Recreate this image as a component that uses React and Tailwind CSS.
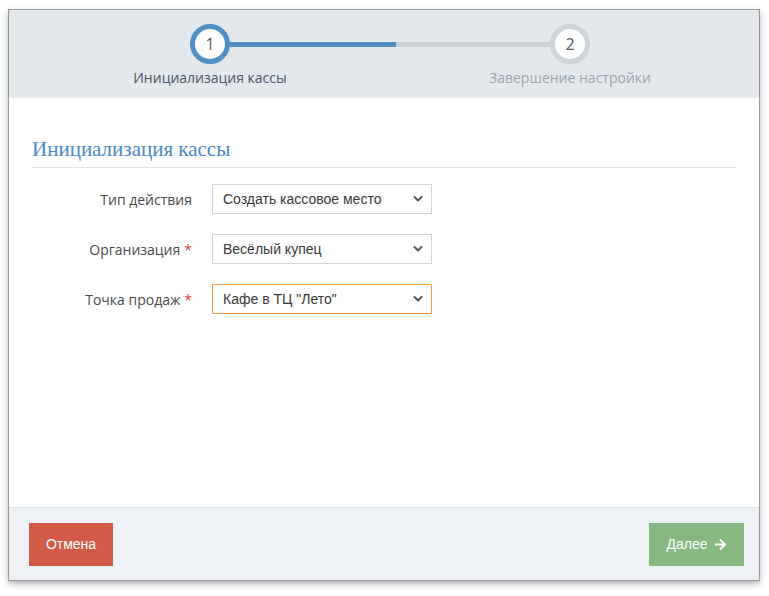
import React from "react";
import { FaArrowRight } from "react-icons/fa";

function Chevron() {
  return (
    <svg width="10" height="10" viewBox="0 0 10 10" className="text-[#555]">
      <polyline points="1.5 3 5 6.5 8.5 3" fill="none" stroke="currentColor" strokeWidth="2" strokeLinecap="round" strokeLinejoin="round" />
    </svg>
  );
}

function Field({ label, value, required, active }) {
  return (
    <div className="flex items-center">
      <div className="w-[160px] text-right text-[14px] text-[#4a4a4a]" style={{ fontFamily: '"Open Sans", sans-serif' }}>
        {label}
        {required && <span className="text-[#e04343] ml-[4px]">*</span>}
      </div>
      <div
        className={
          "ml-[20px] w-[220px] h-[30px] bg-white flex items-center justify-between pl-[10px] pr-[8px] text-[14px] text-[#393939] border " +
          (active ? "border-[#f59942]" : "border-[#d5d5d5]")
        }
      >
        <span>{value}</span>
        <Chevron />
      </div>
    </div>
  );
}

export default function App() {
  return (
    <div className="w-full h-[596px] bg-white pt-[9px] pl-[8px]" style={{ fontFamily: '"Liberation Sans", Arial, sans-serif' }}>
      <div className="w-[752px] h-[572px] border border-[#9a9a9a] bg-white flex flex-col shadow-[0_3px_6px_rgba(0,0,0,0.3)]">
        {/* stepper */}
        <div className="h-[88px] bg-[#e3e8ed] pt-[14px]" style={{ fontFamily: '"Open Sans", sans-serif' }}>
          <div className="flex items-center pl-[181px]">
            <div className="w-[40px] h-[40px] rounded-full border-[5px] border-[#4f8fc3] bg-white flex items-center justify-center text-[16px] text-[#555]">
              1
            </div>
            <div className="w-[166px] h-[5px] bg-[#4f8fc3]" />
            <div className="w-[154px] h-[5px] bg-[#ced3d8]" />
            <div className="w-[40px] h-[40px] rounded-full border-[5px] border-[#ced3d8] bg-white flex items-center justify-center text-[16px] text-[#4a5a6a]">
              2
            </div>
          </div>
          <div className="flex pl-[101px] mt-[4px] text-[14px] leading-[20px]">
            <div className="w-[200px] text-center text-[#4a5566]">Инициализация кассы</div>
            <div className="w-[160px]" />
            <div className="w-[200px] text-center text-[#9aa3ad]">Завершение настройки</div>
          </div>
        </div>

        {/* body */}
        <div className="flex-1 pt-[38px] pl-[23px] pr-[23px]">
          <h3 className="text-[21px] leading-[27px] text-[#4a8bc5] pb-[4px] border-b border-[#dde4ea]" style={{ fontFamily: '"Liberation Serif", "Times New Roman", serif' }}>
            Инициализация кассы
          </h3>
          <div className="flex flex-col gap-[20px] mt-[16px]">
            <Field label="Тип действия" value="Создать кассовое место" />
            <Field label="Организация" value="Весёлый купец" required />
            <Field label="Точка продаж" value='Кафе в ТЦ "Лето"' required active />
          </div>
        </div>

        {/* footer */}
        <div className="h-[73px] bg-[#eef2f7] border-t border-[#e1e6ec] flex items-start justify-between pt-[15px] pl-[20px] pr-[15px]">
          <button className="w-[84px] h-[43px] bg-[#d15b47] text-white text-[14px]">Отмена</button>
          <button className="w-[95px] h-[43px] bg-[#87b87f] text-white text-[14px] flex items-center justify-center gap-[6px]">
            Далее
            <FaArrowRight className="w-[13px] h-[13px]" />
          </button>
        </div>
      </div>
    </div>
  );
}
